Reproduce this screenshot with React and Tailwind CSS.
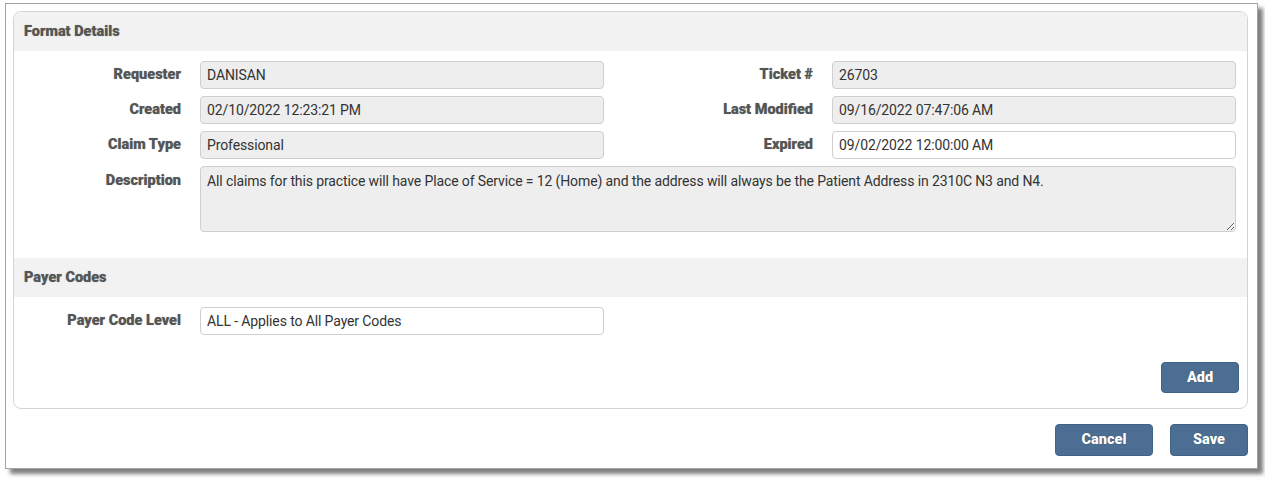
import React from "react";

const font = { fontFamily: "Roboto, 'Noto Sans', sans-serif" };

function Label({ children, w, top }) {
  return (
    <div
      className={`${w} shrink-0 text-right text-[14.5px] font-black text-[#555] [text-shadow:0_0_1px_rgba(0,0,0,0.35)] ${top ? "self-start pt-[4px]" : ""}`}
    >
      {children}
    </div>
  );
}

function Field({ value, white }) {
  return (
    <div
      className={`ml-[19px] flex h-[28px] w-[404px] shrink-0 items-center rounded-[4px] border border-[#cfcfcf] px-[6px] text-[14px] tracking-[-0.12px] text-[#333] ${white ? "bg-white" : "bg-[#eeeeee]"}`}
    >
      {value}
    </div>
  );
}

function Btn({ children, w }) {
  return (
    <button
      className={`${w} h-[32px] rounded-[4px] border border-[#3f6285] bg-[#4b6e92] text-[14.5px] font-black text-white [text-shadow:0_0_1px_rgba(0,0,0,0.4)]`}
    >
      {children}
    </button>
  );
}

export default function App() {
  return (
    <div className="min-h-[479px] bg-white pt-[3px] pl-[5px]" style={font}>
      <div className="relative w-[1253px] border border-[#a3a3a3] bg-white pt-[7px] pl-[7px] pr-[9px] pb-[12px] shadow-[5px_5px_4px_#00000080]">
        <div className="w-[1235px] overflow-hidden rounded-[8px] border border-[#d4d4d4] bg-white">
          <div className="flex h-[39px] items-center bg-[#f2f2f2] pl-[10px] text-[14.5px] font-black text-[#555] [text-shadow:0_0_1px_rgba(0,0,0,0.35)]">
            Format Details
          </div>
          <div className="flex flex-col gap-[7px] pt-[10px]">
            <div className="flex items-center">
              <Label w="w-[167px]">Requester</Label>
              <Field value="DANISAN" />
              <Label w="w-[209px]">Ticket #</Label>
              <Field value="26703" />
            </div>
            <div className="flex items-center">
              <Label w="w-[167px]">Created</Label>
              <Field value="02/10/2022 12:23:21 PM" />
              <Label w="w-[209px]">Last Modified</Label>
              <Field value="09/16/2022 07:47:06 AM" />
            </div>
            <div className="flex items-center">
              <Label w="w-[167px]">Claim Type</Label>
              <Field value="Professional" />
              <Label w="w-[209px]">Expired</Label>
              <Field value="09/02/2022 12:00:00 AM" white />
            </div>
            <div className="flex">
              <Label w="w-[167px]" top>
                Description
              </Label>
              <textarea
                readOnly
                className="ml-[19px] h-[66px] w-[1036px] rounded-[4px] border border-[#cfcfcf] bg-[#eeeeee] px-[6px] pt-[4px] text-[14px] tracking-[-0.12px] text-[#333] outline-none"
                style={font}
                defaultValue="All claims for this practice will have Place of Service = 12 (Home) and the address will always be the Patient Address in 2310C N3 and N4."
              />
            </div>
          </div>
          <div className="mt-[26px] flex h-[39px] items-center bg-[#f2f2f2] pl-[10px] text-[14.5px] font-black text-[#555] [text-shadow:0_0_1px_rgba(0,0,0,0.35)]">
            Payer Codes
          </div>
          <div className="flex items-center pt-[10px]">
            <Label w="w-[167px]">Payer Code Level</Label>
            <Field value="ALL - Applies to All Payer Codes" white />
          </div>
          <div className="flex justify-end pt-[27px] pr-[8px] pb-[15px]">
            <button className="h-[31px] w-[78px] rounded-[4px] border border-[#3f6285] bg-[#4b6e92] text-[14.5px] font-black text-white [text-shadow:0_0_1px_rgba(0,0,0,0.4)]">
              Add
            </button>
          </div>
        </div>
        <div className="mt-[15px] flex justify-end gap-[17px]">
          <Btn w="w-[98px]">Cancel</Btn>
          <Btn w="w-[78px]">Save</Btn>
        </div>
      </div>
    </div>
  );
}
